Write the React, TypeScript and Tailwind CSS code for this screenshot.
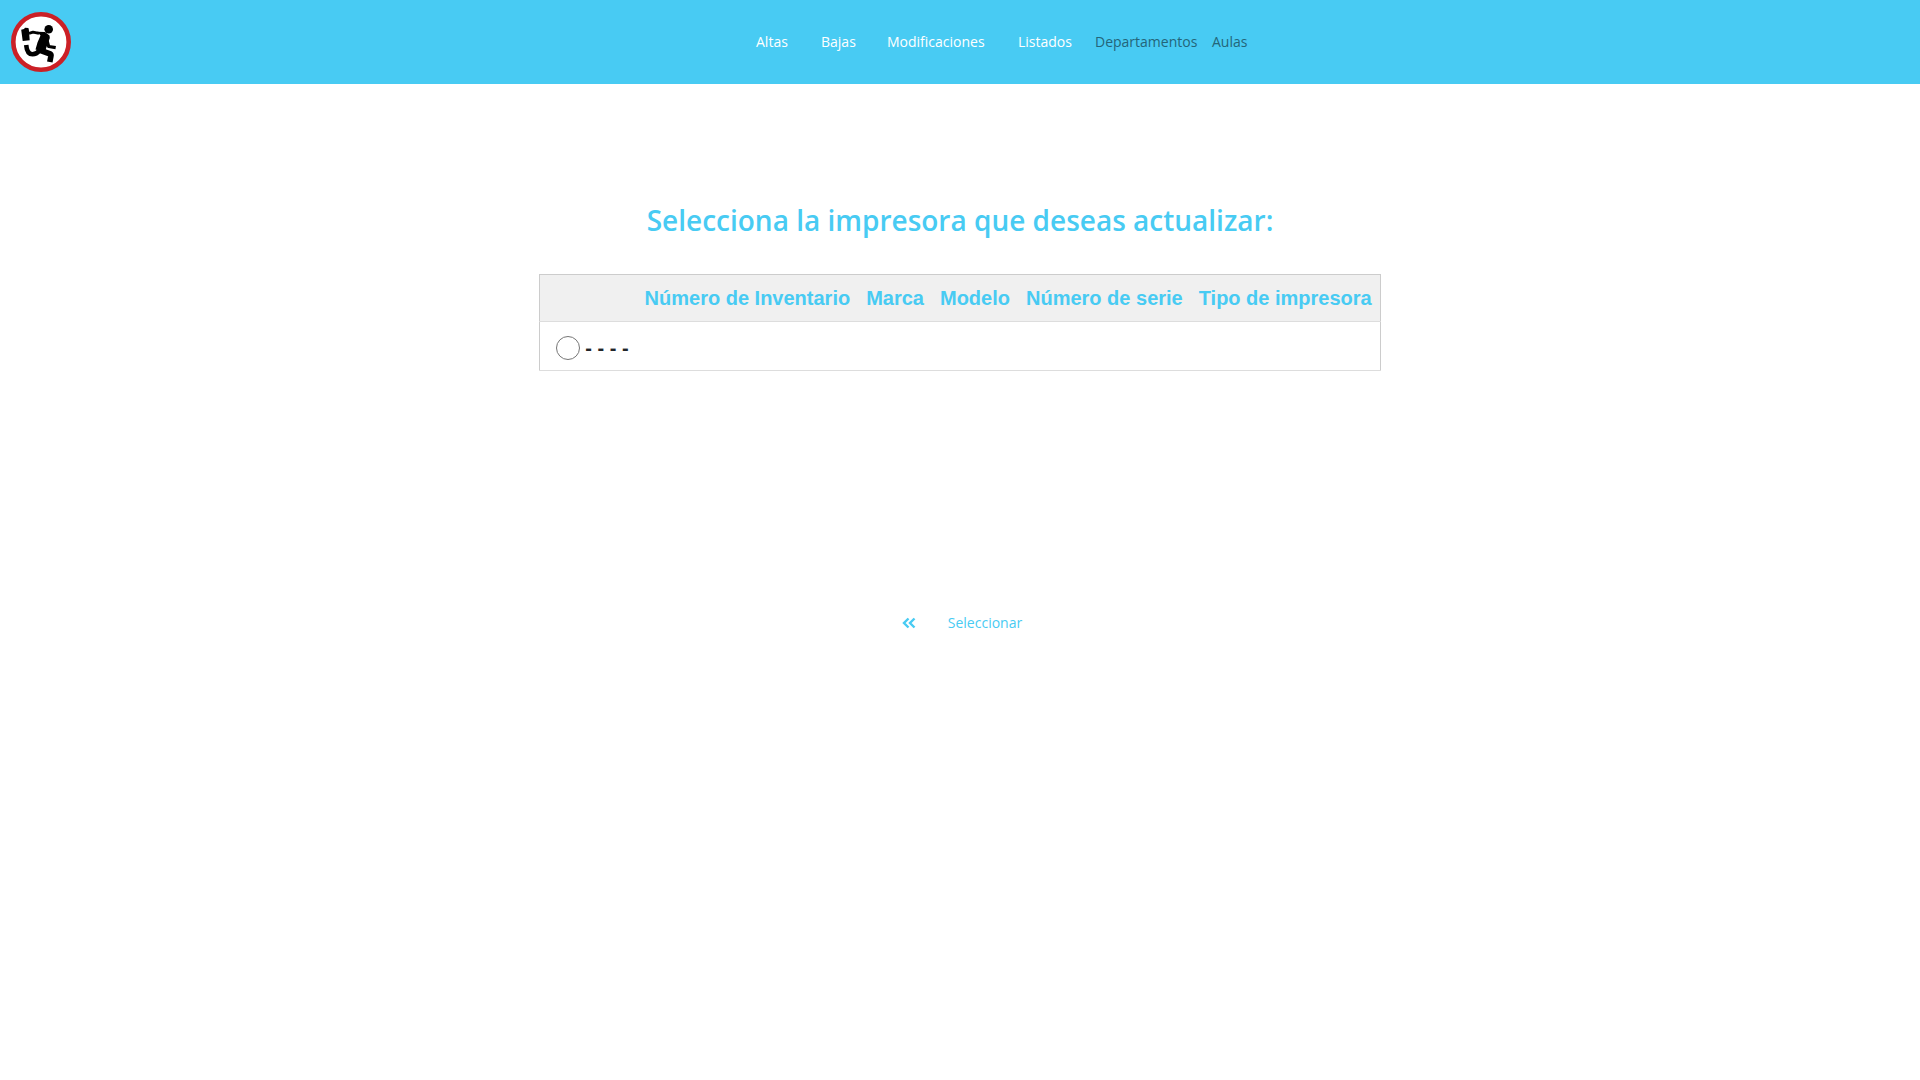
const menus = [
  { label: "Altas", width: "w-[65px]" },
  { label: "Bajas", width: "w-[66px]" },
  { label: "Modificaciones", width: "w-[131px]" },
  { label: "Listados", width: "w-[77px]" },
];

const links = [
  { label: "Departamentos", width: "w-[117px]" },
  { label: "Aulas", width: "w-[36px]" },
];

const columns = ["Número de Inventario", "Marca", "Modelo", "Número de serie", "Tipo de impresora"];

function Logo() {
  return (
    <svg viewBox="0 0 60 60" className="h-[60px] w-[60px]" aria-hidden="true">
      <circle cx="30" cy="30" r="27.7" fill="#fff" stroke="#cb2026" strokeWidth="4.6" />
      <circle cx="37.7" cy="17.2" r="4.3" />
      <path d="M10.200 17.800l2.800-.7 1-1.300 3.400.2.500 2 .8 10.300-7 .8z" />
      <path d="M26 19.700l8 .3 4.500 3.500.3 2.500-3.800 10.500-1 4-9.500-3 2-7 3-7z" />
      <g fill="none" stroke="#000" strokeLinejoin="round">
        <path d="M18 21.300l4-1.200 6 1.200" strokeWidth="2.800" />
        <path d="M36 28.500l1.700 6 7 1.200" strokeWidth="3.200" />
        <path d="M15.200 33q.8 9.300 6.300 9.300 4 0 7-4" strokeWidth="4.600" />
        <path d="M27 37.500l12.300 4.500q1 .8.600 2.200l-1.100 5.800" strokeWidth="5.600" />
      </g>
    </svg>
  );
}

export default function App() {
  return (
    <div className="min-h-screen bg-white font-['Open_Sans','Noto_Sans',sans-serif] text-[#48cbf3]">
      <header className="grid h-[84px] grid-cols-[1fr_auto_1fr] items-center bg-[#48cbf3] text-sm leading-6">
        <a href="#inicio" aria-label="Inicio" className="ml-[11px] w-[60px]">
          <Logo />
        </a>
        <nav className="ml-[84px] flex whitespace-nowrap">
          {menus.map((item) => (
            <button key={item.label} type="button" className={`${item.width} text-left text-white`}>
              {item.label}
            </button>
          ))}
          {links.map((item) => (
            <a key={item.label} href={`#${item.label}`} className={`${item.width} text-[#246579]`}>
              {item.label}
            </a>
          ))}
        </nav>
      </header>

      <main className="flex flex-col items-center">
        <h1 className="mt-[116px] text-center text-[28px] font-semibold leading-10">
          Selecciona la impresora que deseas actualizar:
        </h1>

        <table className="mt-[34px] border-collapse border border-[#ccc] font-['Liberation_Sans',Arial,sans-serif] text-[20px] font-bold">
          <thead>
            <tr className="h-[47px] border-b border-[#ddd] bg-[#f0f0f0] text-left">
              <th />
              {columns.map((name) => (
                <th key={name} className="whitespace-nowrap px-2">
                  {name}
                </th>
              ))}
            </tr>
          </thead>
          <tbody>
            <tr className="h-[49px] border-b border-[#ddd] text-[#212529]">
              <td className="pl-4 pr-2">
                <label className="flex items-center gap-[5px] whitespace-nowrap pt-1">
                  <input
                    type="radio"
                    name="impresora"
                    className="h-6 w-6 appearance-none rounded-full border border-[#767676] bg-white checked:border-[7px] checked:border-[#48cbf3]"
                  />
                  - - - -
                </label>
              </td>
              {columns.map((name) => (
                <td key={name} />
              ))}
            </tr>
          </tbody>
        </table>

        <div className="ml-[4px] mt-[240px] flex items-center gap-8 text-sm leading-6">
          <a href="#volver" aria-label="Volver">
            <svg viewBox="0 0 14 12" className="h-3 w-[14px]" fill="none" stroke="currentColor" strokeWidth="2.4" aria-hidden="true">
              <path d="M6.500 1.500L2 6l4.500 4.500M12.500 1.500L8 6l4.500 4.500" />
            </svg>
          </a>
          <button type="button">Seleccionar</button>
        </div>
      </main>
    </div>
  );
}
